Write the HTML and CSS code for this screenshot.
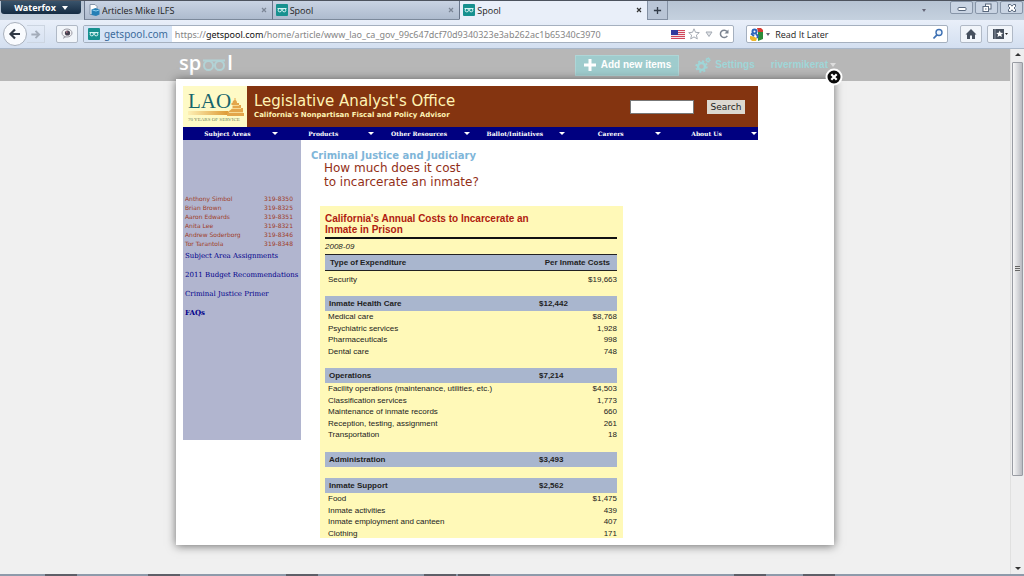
FILE: index.html
```html
<!DOCTYPE html>
<html lang="en">
<head>
<meta charset="utf-8">
<meta name="viewport" content="width=device-width, initial-scale=1">
<title>Spool</title>
<link rel="stylesheet" href="styles.css">
</head>
<body>
<svg class="defs" aria-hidden="true">
  <symbol id="spool" viewBox="0 0 12 12"><rect width="12" height="12" rx="1" fill="#17918f"/><path d="M1.500 4.500H10.500" stroke="#d5f4f2" stroke-width="1"/><circle cx="3.800" cy="6.200" r="1.700" fill="none" stroke="#d5f4f2"/><circle cx="8.200" cy="6.200" r="1.700" fill="none" stroke="#d5f4f2"/></symbol>
  <symbol id="x" viewBox="0 0 8 8"><path d="M2 2l4 4M6 2L2 6" stroke="currentColor" stroke-width="1.2"/></symbol>
</svg>

<header class="titlebar">
  <button class="app-menu">Waterfox <span class="caret"></span></button>
  <div class="tabs">
    <div class="tab">
      <svg class="icon12" viewBox="0 0 12 12"><path d="M2 .5h5l2 2v8H2z" fill="#fff" stroke="#8494a8"/><path d="M3.500 5.500l4-1.500 4 1.500v5l-3.500 1.500-4.500-1z" fill="#257fb5"/><path d="M4.500 6l3.500 1 3-1" fill="none" stroke="#8fd0f0"/></svg>
      <span class="tab-name">Articles Mike ILFS</span>
      <button class="tab-close" aria-label="Close tab"><svg><use href="#x"/></svg></button>
    </div>
    <div class="tab">
      <svg class="icon12"><use href="#spool"/></svg>
      <span class="tab-name">Spool</span>
      <button class="tab-close" aria-label="Close tab"><svg><use href="#x"/></svg></button>
    </div>
    <div class="tab active">
      <svg class="icon12"><use href="#spool"/></svg>
      <span class="tab-name">Spool</span>
      <button class="tab-close" aria-label="Close tab"><svg><use href="#x"/></svg></button>
    </div>
    <button class="tab-new" aria-label="New tab"><svg viewBox="0 0 10 10"><path d="M5 1v8M1 5h8" stroke="#333c49" stroke-width="1.500"/></svg></button>
  </div>
  <div class="win-buttons">
    <button class="win-list" aria-label="List tabs"><span class="caret tiny"></span></button>
    <button class="win" aria-label="Minimize"><svg viewBox="0 0 12 10"><rect x="2" y="4.500" width="8" height="3" rx="1" fill="#fff" stroke="#58677c"/></svg></button>
    <button class="win" aria-label="Restore"><svg viewBox="0 0 12 10"><rect x="4.500" y="1" width="5.500" height="5" fill="#fff" stroke="#58677c"/><rect x="2" y="3.500" width="5.500" height="5" fill="#fff" stroke="#58677c"/><path d="M4 6h1.500" stroke="#58677c"/></svg></button>
    <button class="win" aria-label="Close window"><svg viewBox="0 0 12 10"><path d="M2.500 1.500h2L6 3.200l1.500-1.700h2v2L8 5l1.500 1.500v2h-2L6 6.800 4.500 8.500h-2v-2L4 5 2.500 3.500z" fill="#fff" stroke="#58677c"/></svg></button>
  </div>
</header>

<div class="toolbar">
  <div class="nav-buttons">
    <button class="back" aria-label="Back"><svg viewBox="0 0 14 14"><path d="M12 7H3M7 2.500L2.500 7 7 11.500" fill="none" stroke="#2f3845" stroke-width="2.200"/></svg></button>
    <button class="forward" aria-label="Forward"><svg viewBox="0 0 12 12"><path d="M1.500 6H10M6 2l4 4-4 4" fill="none" stroke="#a3acb9" stroke-width="2"/></svg></button>
  </div>
  <button class="tool page-tool" aria-label="Send to Spool"><svg viewBox="0 0 14 12"><ellipse cx="7" cy="5" rx="5" ry="4" fill="#f4f4f6" stroke="#9a9aa4"/><circle cx="7.500" cy="5" r="2.600" fill="#45404f"/><circle cx="6.800" cy="4" r=".8" fill="#d98898"/><path d="M4 8l-1 3 3-2" fill="#9a9aa4"/></svg></button>
  <div class="address">
    <span class="site"><svg class="icon12"><use href="#spool"/></svg>getspool.com</span>
    <span class="url">https://<b>getspool.com</b>/home/article/www_lao_ca_gov_99c647dcf70d9340323e3ab262ac1b65340c3970</span>
    <svg class="flag" viewBox="0 0 14 9"><path fill="#f4e4e6" d="M0 0h14v9H0z"/><path d="M0 .5h14M0 2.500h14M0 4.500h14M0 6.500h14M0 8.500h14" stroke="#d2465a"/><path fill="#313a9c" d="M0 0h7v5H0z"/></svg>
    <button class="plain" aria-label="Bookmark"><svg viewBox="0 0 12 12"><path d="M6 .8l1.500 3.500 3.800.3-2.900 2.500.9 3.800L6 8.900l-3.300 2 .9-3.800L.7 4.600l3.800-.3z" fill="#fff" stroke="#a4aab3"/></svg></button>
    <button class="plain" aria-label="History"><svg viewBox="0 0 12 12"><path d="M3 4h6L6 8.500z" fill="#e4e7ea" stroke="#a4aab3"/></svg></button>
    <button class="plain" aria-label="Reload"><svg viewBox="0 0 12 12"><path d="M9.300 7.800A3.700 3.700 0 1 1 9 3.500" fill="none" stroke="#7b8390" stroke-width="1.500"/><path d="M6.500 5.500h4v-4z" fill="#7b8390"/></svg></button>
  </div>
  <div class="search">
    <svg class="engine" viewBox="0 0 13 13"><path fill="#fff" d="M0 0h13v13H0z"/><path fill="#2c8b3a" d="M8 4h5v7l-5 2z"/><path fill="#d63a31" d="M7 0h4l2 2v2H8z"/><path fill="#edb72b" d="M0 8l4 .5 3 2-1 2.500H2L0 11z"/><circle cx="4.500" cy="3.500" r="2" fill="#fff" stroke="#2f66bb" stroke-width="2"/><path d="M1 5.500l3 2.500M6 6l2 2-1 2" fill="none" stroke="#2f66bb" stroke-width="1.800"/></svg>
    <span class="caret tiny"></span>
    <input type="text" value="Read It Later" aria-label="Search with Google">
    <button class="plain" aria-label="Search"><svg viewBox="0 0 12 12"><circle cx="7" cy="4.500" r="3" fill="#eef6ff" stroke="#3d70b3" stroke-width="1.400"/><path d="M5 6.800L1.500 10.500" stroke="#3d70b3" stroke-width="1.800"/></svg></button>
  </div>
  <button class="tool" aria-label="Home"><svg viewBox="0 0 12 12"><path d="M6 1L.5 6.500H2V11h3V7.500h2V11h3V6.500h1.500z" fill="#46505e"/></svg></button>
  <button class="tool wide" aria-label="Bookmarks"><svg viewBox="0 0 16 12"><rect x="1" y="1" width="11" height="10" fill="#46505e"/><path d="M3 1v10" stroke="#8892a0"/><path d="M7.700 2.500l1 2.300 2.500.2-1.900 1.600.6 2.500-2.200-1.400-2.200 1.400.6-2.500L4.200 5l2.500-.2z" fill="#fff"/><path d="M13 5h3l-1.500 2z" fill="#222"/></svg></button>
</div>

<div class="viewport">
  <main class="page">
    <div class="site-bar">
      <div class="brand" aria-label="spool">
        <span>sp</span><svg viewBox="0 0 24 14"><path d="M1 2.500h22" stroke="#b2d3d6" stroke-width="2"/><circle cx="6.500" cy="7.500" r="4.500" fill="none" stroke="#b2d3d6" stroke-width="2"/><circle cx="17.500" cy="7.500" r="4.500" fill="none" stroke="#b2d3d6" stroke-width="2"/></svg><span>l</span>
      </div>
      <nav class="user-nav">
        <button class="add"><svg viewBox="0 0 12 12"><path d="M6 0v12M0 6h12" stroke="#fff" stroke-width="3"/></svg>Add new items</button>
        <a href="#" class="settings"><svg viewBox="0 0 16 16"><circle cx="6.500" cy="9.500" r="3.500" fill="none" stroke="#9fd6d8" stroke-width="2.400"/><circle cx="6.500" cy="9.500" r="5.300" fill="none" stroke="#9fd6d8" stroke-width="1.800" stroke-dasharray="2.080 2.080"/><circle cx="13" cy="3" r="1.500" fill="none" stroke="#9fd6d8" stroke-width="1.300"/><circle cx="13" cy="3" r="2.400" fill="none" stroke="#9fd6d8" stroke-width=".8" stroke-dasharray="1 1"/></svg>Settings</a>
        <a href="#" class="user">rivermikerat<span class="caret"></span></a>
      </nav>
    </div>

    <section class="modal" role="dialog" aria-label="Article">
      <button class="modal-close" aria-label="Close article"><svg viewBox="0 0 18 18"><circle cx="9" cy="9" r="7.500" fill="#0a0a0a" stroke="#fff" stroke-width="2"/><path d="M6.300 6.300l5.400 5.400M11.700 6.300l-5.400 5.400" stroke="#fff" stroke-width="2.200"/></svg></button>
      <div class="scroller">
        <article class="lao">
          <header class="banner">
            <svg class="lao-logo" viewBox="0 0 64 41" role="img" aria-label="LAO, 70 years of service">
              <rect width="64" height="41" fill="#fefac6"/>
              <defs><linearGradient id="gold"><stop offset="0" stop-color="#fdf0b4"/><stop offset="1" stop-color="#dd9a35"/></linearGradient></defs>
              <path d="M5 25h40v4H5z" fill="url(#gold)"/>
              <path d="M44 30h17v-3h-1v-5h-2v-3h-2v-2h-2c0-1.500-.5-2.500-1.500-3V12h-1v2c-1.500.5-2 1.500-2 3h-1v2h1v3l-2 2-3 2z" fill="#e3a64a"/>
              <path d="M49 19.500h7M48 22.500h10M46 26.500h14" stroke="#fdf0b4" stroke-width=".7"/>
              <text x="5" y="22" class="logo-name">LAO</text>
              <text x="5" y="35" class="logo-line">70 YEARS OF SERVICE</text>
            </svg>
            <div class="banner-text">
              <h1>Legislative Analyst's Office</h1>
              <p>California's Nonpartisan Fiscal and Policy Advisor</p>
            </div>
            <form class="banner-search">
              <input type="text" aria-label="Search the site">
              <button type="button">Search</button>
            </form>
          </header>
          <nav class="menu">
            <a href="#"><span>Subject Areas</span><i></i></a>
            <a href="#"><span>Products</span><i></i></a>
            <a href="#"><span>Other Resources</span><i></i></a>
            <a href="#"><span>Ballot/Initiatives</span><i></i></a>
            <a href="#"><span>Careers</span><i></i></a>
            <a href="#"><span>About Us</span><i></i></a>
          </nav>
          <div class="columns">
            <aside class="sidebar">
              <table class="staff">
                <tr><td>Anthony Simbol</td><td>319-8350</td></tr>
                <tr><td>Brian Brown</td><td>319-8325</td></tr>
                <tr><td>Aaron Edwards</td><td>319-8351</td></tr>
                <tr><td>Anita Lee</td><td>319-8321</td></tr>
                <tr><td>Andrew Soderborg</td><td>319-8346</td></tr>
                <tr><td>Tor Tarantola</td><td>319-8348</td></tr>
              </table>
              <a href="#">Subject Area Assignments</a>
              <a href="#">2011 Budget Recommendations</a>
              <a href="#">Criminal Justice Primer</a>
              <a href="#" class="strong">FAQs</a>
            </aside>
            <div class="content">
              <h2>Criminal Justice and Judiciary</h2>
              <h3>How much does it cost<br>to incarcerate an inmate?</h3>
              <div class="card">
                <h4>California's Annual Costs to Incarcerate an<br>Inmate in Prison</h4>
                <p class="period">2008-09</p>
                <table class="costs">
                  <thead><tr><th>Type of Expenditure</th><th colspan="2">Per Inmate Costs</th></tr></thead>
                  <tbody>
                    <tr class="single"><td>Security</td><td></td><td>$19,663</td></tr>
                  </tbody>
                  <tbody>
                    <tr class="gap-s"><td colspan="3"></td></tr>
                    <tr class="band"><th>Inmate Health Care</th><th>$12,442</th><td></td></tr>
                    <tr><td>Medical care</td><td></td><td>$8,768</td></tr>
                    <tr><td>Psychiatric services</td><td></td><td>1,928</td></tr>
                    <tr><td>Pharmaceuticals</td><td></td><td>998</td></tr>
                    <tr><td>Dental care</td><td></td><td>748</td></tr>
                  </tbody>
                  <tbody>
                    <tr class="gap"><td colspan="3"></td></tr>
                    <tr class="band"><th>Operations</th><th>$7,214</th><td></td></tr>
                    <tr><td>Facility operations (maintenance, utilities, etc.)</td><td></td><td>$4,503</td></tr>
                    <tr><td>Classification services</td><td></td><td>1,773</td></tr>
                    <tr><td>Maintenance of inmate records</td><td></td><td>660</td></tr>
                    <tr><td>Reception, testing, assignment</td><td></td><td>261</td></tr>
                    <tr><td>Transportation</td><td></td><td>18</td></tr>
                  </tbody>
                  <tbody>
                    <tr class="gap"><td colspan="3"></td></tr>
                    <tr class="band"><th>Administration</th><th>$3,493</th><td></td></tr>
                  </tbody>
                  <tbody>
                    <tr class="gap"><td colspan="3"></td></tr>
                    <tr class="band"><th>Inmate Support</th><th>$2,562</th><td></td></tr>
                    <tr><td>Food</td><td></td><td>$1,475</td></tr>
                    <tr><td>Inmate activities</td><td></td><td>439</td></tr>
                    <tr><td>Inmate employment and canteen</td><td></td><td>407</td></tr>
                    <tr><td>Clothing</td><td></td><td>171</td></tr>
                  </tbody>
                </table>
              </div>
            </div>
          </div>
        </article>
      </div>
    </section>
  </main>
  <div class="scrollbar" aria-hidden="true">
    <span class="arrow up"></span>
    <div class="track"><div class="thumb"><span></span></div></div>
    <span class="arrow down"></span>
  </div>
</div>
<footer class="taskbar"><svg width="100%" height="2" aria-hidden="true"><path d="M45 1h32M148 1h32M286 1h32M424 1h32M458 1h32M734 1h32M803 1h32" stroke="#5d5f68" stroke-width="2"/></svg></footer>
</body>
</html>
```
FILE: styles.css
```css
* { box-sizing: border-box; }
html, body { height: 100%; }
body {
  margin: 0;
  display: flex;
  flex-direction: column;
  overflow: hidden;
  background: #f0f0f0;
  font-family: "Open Sans", "Noto Sans", sans-serif;
  font-size: 9px;
  color: #222;
}
button, input { font: inherit; color: inherit; margin: 0; padding: 0; border: 0; background: none; }
button { display: flex; align-items: center; justify-content: center; }
a { color: inherit; text-decoration: none; }
h1, h2, h3, h4, p { margin: 0; }
svg { display: block; }
.defs { display: none; }
.icon12 { width: 12px; height: 12px; flex: none; }
.caret { border: 3px solid transparent; border-top: 4px solid currentColor; border-bottom: 0; flex: none; }
.caret.tiny { border-width: 3px 2px 0; color: #667; }

/* window title bar and tabs */
.titlebar {
  flex: none;
  height: 20px;
  display: flex;
  border-top: 1px solid #4d535e;
  background: linear-gradient(#b6c3d3, #c5d1df);
}
.app-menu {
  width: 80px;
  height: 13px;
  margin-left: 1px;
  gap: 6px;
  border-radius: 0 0 3px 3px;
  background: linear-gradient(#39536b, #152c43);
  color: #fff;
  font-weight: 700;
}
.tabs { display: flex; flex: 0 1 584px; min-width: 0; margin-left: 3px; }
.tab {
  flex: 1 1 188px;
  min-width: 0;
  display: flex;
  align-items: center;
  gap: 2px;
  padding: 0 4px 0 3px;
  border-left: 1px solid #68758a;
  border-bottom: 1px solid #7c899b;
  background: linear-gradient(#c9d3e3, #aebbce);
}
.tab.active { background: #e9eff9; border-bottom-color: #e9eff9; }
.tab-name { flex: 1; white-space: nowrap; overflow: hidden; }
.tab-close { color: #7b8595; }
.tab.active .tab-close { color: #333; }
.tab-close svg { width: 8px; height: 8px; }
.tab-new { width: 21px; flex: none; border: 1px solid #8390a3; border-top: 0; background: #b9c5d6; }
.tab-new svg { width: 9px; height: 9px; }
.win-buttons { display: flex; gap: 2px; margin-left: auto; padding-right: 1px; }
.win-list { width: 12px; margin-right: 18px; }
.win { width: 23px; height: 13px; border: 1px solid #8795a8; border-radius: 2px; background: #c9d4e3; }
.win svg { width: 12px; height: 10px; }

/* navigation toolbar */
.toolbar {
  flex: none;
  height: 29px;
  display: flex;
  align-items: center;
  gap: 5px;
  padding: 0 11px 0 3px;
  background: linear-gradient(#e9eff9, #d3dff0);
  border-bottom: 1px solid #a9b7c9;
}
.nav-buttons { display: flex; align-items: center; width: 48px; }
.back { width: 24px; height: 24px; border: 1px solid #a8b0bc; border-radius: 50%; background: #f9fbfe; }
.back svg { width: 14px; height: 14px; }
.forward { width: 18px; height: 18px; border: 1px solid #ccd5e1; border-left: 0; }
.forward svg { width: 11px; height: 11px; }
.tool { width: 22px; height: 18px; border: 1px solid #b0b9c6; border-radius: 2px; background: #f1f5fa; flex: none; }
.tool svg { width: 12px; height: 12px; }
.tool.wide { width: 26px; }
.tool.wide svg { width: 16px; }
.page-tool svg { width: 14px; }
.address, .search { height: 18px; display: flex; align-items: center; border: 1px solid #a5b0bf; border-radius: 2px; background: #fff; }
.address { flex: 1 1 652px; min-width: 0; gap: 3px; padding-right: 3px; font-family: "Noto Sans", sans-serif; }
.site { height: 100%; display: flex; align-items: center; gap: 4px; padding: 0 4px; background: #d6e4f6; color: #3c6b9b; font-size: 10px; }
.url { flex: 1; min-width: 0; overflow: hidden; white-space: nowrap; color: #858585; }
.url b { font-weight: 400; color: #111; }
.flag { width: 14px; height: 9px; flex: none; }
.plain { flex: none; }
.plain svg { width: 12px; height: 12px; }
.search { flex: 0 1 202px; min-width: 0; margin: 0 7px; padding: 0 3px; gap: 3px; }
.search input { flex: 1; min-width: 0; height: 16px; padding-left: 2px; }
.engine { width: 13px; height: 13px; flex: none; }

/* page behind the reader */
.viewport { flex: 1; min-height: 0; display: flex; }
.page { flex: 1; min-width: 0; position: relative; }
.site-bar {
  height: 32px;
  display: flex;
  align-items: center;
  justify-content: space-between;
  padding: 0 174px 0 179px;
  background: #b7b7b7;
}
.brand { display: flex; align-items: center; gap: 1px; color: #fff; font-size: 20px; font-weight: 600; line-height: 24px; height: 32px; padding-bottom: 4px; }
.brand svg { width: 24px; height: 14px; margin-top: 3px; }
.user-nav { display: flex; align-items: center; font: 700 10px/14px "Liberation Sans", Arial, sans-serif; color: #9fd6d8; }
.add { height: 21px; padding: 0 7px 0 8px; gap: 5px; background: #9fcccd; border: 1px solid #aed6d7; color: #fff; }
.add svg { width: 12px; height: 12px; }
.settings { display: flex; align-items: center; gap: 4px; margin: 0 16px; }
.settings svg { width: 16px; height: 16px; }
.user { display: flex; align-items: center; gap: 2px; }
.user .caret { color: #ddd; }

/* reader overlay */
.modal {
  position: absolute;
  top: 30px;
  bottom: 29px;
  left: 0;
  right: 0;
  margin: 0 auto;
  max-width: 658px;
  padding: 7px;
  background: #fff;
  box-shadow: 0 1px 9px rgba(0, 0, 0, .55);
}
.modal-close { position: absolute; top: -11px; right: -9px; }
.modal-close svg { width: 18px; height: 18px; }
.scroller { height: 100%; overflow: hidden; }
.lao { max-width: 575px; font-family: "DejaVu Sans", sans-serif; }
.banner { display: flex; align-items: center; background: #843410; color: #fff3b4; }
.lao-logo { width: 64px; height: 41px; flex: none; }
.logo-name { font: 21px "Liberation Serif", serif; fill: #17656c; }
.logo-line { font: 5px "Liberation Serif", serif; fill: #6d7f5c; }
.banner-text { flex: 1; padding-left: 7px; white-space: nowrap; }
.banner h1 { font-size: 15px; font-weight: 400; line-height: 17px; }
.banner p { font-size: 7px; font-weight: 700; line-height: 10px; }
.banner-search { display: flex; align-items: center; gap: 13px; padding-right: 13px; }
.banner-search input { width: 64px; height: 14px; background: #fff; border: 1px solid #777; color: #222; }
.banner-search button { width: 38px; height: 14px; background: #dcd8d0; color: #222; font-size: 9px; }
.menu { display: grid; grid-template-columns: repeat(6, 1fr); background: #000080; color: #fff; font: 700 6px/13px "DejaVu Serif", serif; }
.menu a { display: flex; align-items: center; padding-right: 1px; white-space: nowrap; }
.menu span { flex: 1; text-align: center; }
.menu i { border: 3px solid transparent; border-top-color: #fff; border-bottom: 0; }
.columns { display: flex; align-items: flex-start; }
.sidebar {
  flex: 0 0 118px;
  min-height: 300px;
  padding: 54px 0 0 2px;
  background: #b1b5cf;
  color: #00008b;
  font: 7px/9px "DejaVu Serif", serif;
}
.sidebar a { display: block; line-height: 10px; margin: 3px 0 9px; white-space: nowrap; }
.sidebar .strong { font-weight: 700; }
.staff { width: 108px; border-collapse: collapse; color: #a03c28; font: 6px/9px "DejaVu Sans", sans-serif; white-space: nowrap; }
.staff td { padding: 0; }
.staff td:last-child { text-align: right; }
.content { flex: 1; padding: 10px 0 0 10px; }
.content h2 { font-size: 10px; line-height: 12px; color: #7fb6d9; }
.content h3 { font-size: 12px; line-height: 14px; font-weight: 400; color: #933018; margin: -1px 0 0 13px; }

/* cost table */
.card {
  width: 303px;
  margin: 17px 0 0 9px;
  padding: 7px 6px 0 5px;
  background: #fff9b8;
  color: #222;
  font-family: "Liberation Sans", Arial, sans-serif;
}
.card h4 { font-size: 10px; line-height: 11px; color: #b01c10; padding-bottom: 2px; border-bottom: 2px solid #111; }
.period { font-size: 8px; font-style: italic; line-height: 15px; }
.costs { width: 100%; border-collapse: collapse; font-size: 8px; line-height: 11px; white-space: nowrap; }
.costs th, .costs td { padding: 0 0 0 3px; text-align: left; }
.costs tr { height: 11px; }
.costs tr:nth-child(odd) { height: 12px; }
.costs tbody tr > :nth-child(2) { width: 45px; padding: 0; }
.costs tbody tr > :nth-child(3) { width: 33px; text-align: right; }
.costs thead tr:first-child { height: 16px; background: #a9b6ce; border: 1px solid #222; border-width: 1px 0; }
.costs thead th:first-child { padding-left: 5px; }
.costs thead th:last-child { padding-right: 7px; text-align: right; }
.costs tbody .band { height: 15px; background: #a9b6ce; }
.costs .band th:first-child { padding-left: 4px; }
.costs tbody tr.single { height: 18px; }
.costs tbody tr.gap { height: 11px; }
.costs tbody tr.gap-s { height: 7px; }

/* scroll bar and screen edge */
.scrollbar { flex: none; width: 14px; display: flex; flex-direction: column; align-items: center; padding: 4px 0; background: #eeeeef; border-left: 1px solid #e0e0e0; }
.arrow { border: 3px solid transparent; flex: none; }
.up { border-top: 0; border-bottom-color: #333; }
.down { border-bottom: 0; border-top-color: #333; }
.track { flex: 1; width: 100%; padding: 6px 1px 0 1px; }
.thumb { height: 82%; border: 1px solid #999ca3; border-radius: 1px; background: linear-gradient(90deg, #f7f7f8, #b9bbc1); display: flex; align-items: center; justify-content: center; }
.thumb span { width: 5px; height: 6px; background: repeating-linear-gradient(#666 0 1px, #ddd 1px 2px); }
.taskbar { flex: none; height: 2px; background: #8d9aaa; }
```
